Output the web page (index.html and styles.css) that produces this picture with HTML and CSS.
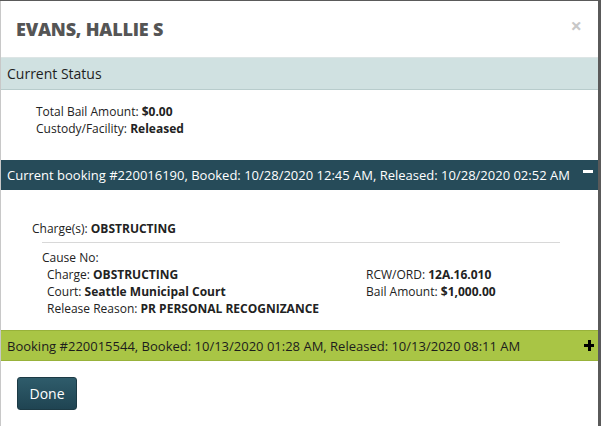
FILE: index.html
```html
<!DOCTYPE html>
<html>
<head>
<meta charset="utf-8">
<link rel="stylesheet" href="styles.css">
</head>
<body>
<div class="modal">
  <div class="modal-header">
    <h1 class="title">EVANS, HALLIE S</h1>
    <span class="close">&times;</span>
  </div>
  <div class="bar bar-status">Current Status</div>
  <div class="status-body">
    <div class="line">Total Bail Amount: <b>$0.00</b></div>
    <div class="line">Custody/Facility: <b>Released</b></div>
  </div>
  <div class="bar bar-dark">
    <span>Current booking #220016190, Booked: 10/28/2020 12:45 AM, Released: 10/28/2020 02:52 AM</span>
    <span class="toggle minus"></span>
  </div>
  <div class="booking-body">
    <div class="charges">Charge(s): <b>OBSTRUCTING</b></div>
    <div class="charge-detail">
      <div class="cause">Cause No:</div>
      <div class="grid">
        <div class="col">
          <div class="line">Charge: <b>OBSTRUCTING</b></div>
          <div class="line">Court: <b>Seattle Municipal Court</b></div>
          <div class="line">Release Reason: <b>PR PERSONAL RECOGNIZANCE</b></div>
        </div>
        <div class="col">
          <div class="line">RCW/ORD: <b>12A.16.010</b></div>
          <div class="line">Bail Amount: <b>$1,000.00</b></div>
        </div>
      </div>
    </div>
  </div>
  <div class="bar bar-green">
    <span>Booking #220015544, Booked: 10/13/2020 01:28 AM, Released: 10/13/2020 08:11 AM</span>
    <span class="toggle plus"></span>
  </div>
  <div class="footer">
    <button class="btn">Done</button>
  </div>
</div>
</body>
</html>
```

FILE: styles.css
```css
* { box-sizing: border-box; }
html, body { margin: 0; padding: 0; }
body {
  background: #5a5a5a;
  font-family: "Open Sans", "DejaVu Sans", sans-serif;
  color: #222;
  height: 426px;
  overflow: hidden;
}
.modal {
  margin-top: 1px;
  width: 598px;
  height: 425px;
  background: #fff;
  border-left: 1px solid #c8c8c8;
}
.modal-header {
  height: 57px;
  padding: 0 15px;
  display: flex;
  align-items: center;
  justify-content: space-between;
  border-bottom: 1px solid #dde5e5;
}
.title {
  margin: 0;
  font-size: 18px;
  font-weight: 800;
  color: #555;
  letter-spacing: -0.2px;
  padding-top: 0;
}
.close {
  font-size: 20px;
  font-weight: 700;
  color: #c8c8c8;
  margin-top: -8px;
  margin-right: 1px;
}
.bar {
  display: flex;
  align-items: center;
  justify-content: space-between;
  padding: 0 6px;
  font-size: 13px;
}
.bar-status {
  height: 32px;
  background: #d0e1e1;
  border-bottom: 1px solid #b8cccc;
  font-size: 14px;
  color: #1e1e1e;
}
.status-body {
  padding: 13px 0 0 35px;
  height: 70px;
  font-size: 12px;
}
.line { line-height: 17px; }
.bar-dark {
  height: 30px;
  background: #264b59;
  color: #fff;
}
.bar-green {
  height: 31px;
  background: #a9c545;
  border-top: 1px solid #98b23a;
  border-bottom: 1px solid #98b23a;
  color: #1c1c1c;
}
.toggle {
  position: relative;
  width: 10px;
  height: 10px;
  margin-right: -1px;
}
.minus::before {
  content: "";
  position: absolute;
  left: 0; top: 0;
  width: 10px; height: 3px;
  background: #fff;
}
.plus { margin-right: -2px; }
.plus::before, .plus::after {
  content: "";
  position: absolute;
  background: #000;
}
.plus::before { left: 0; top: 3px; width: 10px; height: 3px; }
.plus::after { left: 3.5px; top: -1px; width: 3px; height: 11px; }
.booking-body {
  padding: 30px 0 0 31px;
  height: 140px;
  font-size: 12px;
}
.charges { line-height: 17px; }
.charge-detail {
  margin: 5px 38px 0 10px;
  border-top: 1px solid #d8d8d8;
  padding-top: 6px;
}
.cause { line-height: 17px; }
.grid {
  display: grid;
  grid-template-columns: 319px 1fr;
  padding-left: 5px;
}
.footer {
  padding: 16px 0 0 16px;
}
.btn {
  display: block;
  width: 60px;
  height: 33px;
  border: 1px solid #1c3a45;
  border-radius: 3px;
  background: linear-gradient(#2f5c6b, #1f4452);
  color: #fff;
  font-family: "Open Sans", sans-serif;
  font-size: 14px;
  padding: 0;
}
```
